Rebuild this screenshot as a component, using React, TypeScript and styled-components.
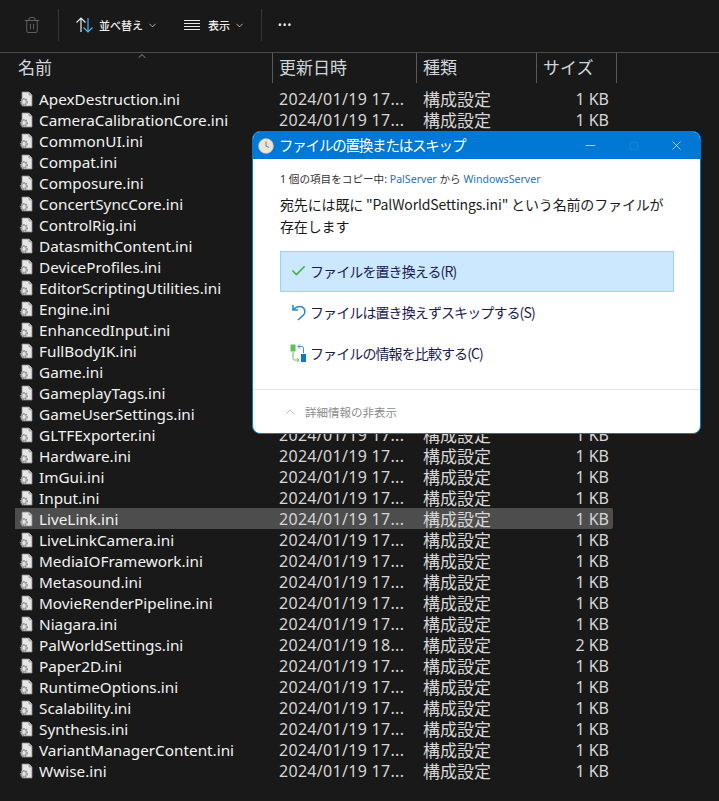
import React from 'react';
import styled, { createGlobalStyle } from 'styled-components';
import { Check, ChevronDown, ChevronUp, Minus, Square, Trash2, X } from 'lucide-react';

const LATIN = `"Noto Sans", "Noto Sans CJK JP", sans-serif`;

const files: { name: string; date?: string; size?: string }[] = [
  { name: 'ApexDestruction.ini' },
  { name: 'CameraCalibrationCore.ini' },
  { name: 'CommonUI.ini' },
  { name: 'Compat.ini' },
  { name: 'Composure.ini' },
  { name: 'ConcertSyncCore.ini' },
  { name: 'ControlRig.ini' },
  { name: 'DatasmithContent.ini' },
  { name: 'DeviceProfiles.ini' },
  { name: 'EditorScriptingUtilities.ini' },
  { name: 'Engine.ini' },
  { name: 'EnhancedInput.ini' },
  { name: 'FullBodyIK.ini' },
  { name: 'Game.ini' },
  { name: 'GameplayTags.ini' },
  { name: 'GameUserSettings.ini' },
  { name: 'GLTFExporter.ini' },
  { name: 'Hardware.ini' },
  { name: 'ImGui.ini' },
  { name: 'Input.ini' },
  { name: 'LiveLink.ini' },
  { name: 'LiveLinkCamera.ini' },
  { name: 'MediaIOFramework.ini' },
  { name: 'Metasound.ini' },
  { name: 'MovieRenderPipeline.ini' },
  { name: 'Niagara.ini' },
  { name: 'PalWorldSettings.ini', date: '2024/01/19 18...', size: '2 KB' },
  { name: 'Paper2D.ini' },
  { name: 'RuntimeOptions.ini' },
  { name: 'Scalability.ini' },
  { name: 'Synthesis.ini' },
  { name: 'VariantManagerContent.ini' },
  { name: 'Wwise.ini' },
];

const FileIcon = () => (
  <svg width="14" height="16" viewBox="0 0 14 16">
    <path d="M3 1h7l3 3v11H3z" fill="#e6e6e6" stroke="#8a8a8a" strokeWidth="0.8" />
    <path d="M10 1v3h3" fill="#bdbdbd" stroke="#8a8a8a" strokeWidth="0.6" />
    <circle cx="4.8" cy="11" r="3" fill="none" stroke="#8c8c8c" strokeWidth="2" strokeDasharray="1.4 0.8" />
    <circle cx="4.8" cy="11" r="2.6" fill="none" stroke="#a8a8a8" strokeWidth="1" />
  </svg>
);

const SortIcon = () => (
  <svg width="20" height="18" viewBox="0 0 20 18" fill="none" strokeWidth="1.2">
    <path d="M6 16V2M1.5 6.5 6 2l4.500 4.500" stroke="#e8e8e8" />
    <path d="M13 2v14M8.500 11.500 13 16l4.500-4.500" stroke="#4fb0f0" />
  </svg>
);

const ViewIcon = () => (
  <svg width="20" height="12" viewBox="0 0 20 12" fill="none" stroke="#e8e8e8" strokeWidth="1">
    <path d="M0 1.500h16M0 4.500h16M0 7.500h16M0 10.500h16" />
  </svg>
);

const ClockIcon = () => (
  <svg width="16" height="16" viewBox="0 0 16 16">
    <circle cx="8" cy="8" r="7.500" fill="#e9e4dc" stroke="#b9b4aa" strokeWidth="0.6" />
    <path d="M8 3.500V8l3 1.500" fill="none" stroke="#8a857c" strokeWidth="1.100" />
  </svg>
);

const SkipIcon = () => (
  <svg width="16" height="18" viewBox="0 0 16 18" fill="none">
    <path d="M2 2v5h5" stroke="#2a86d8" strokeWidth="1.600" />
    <path d="M2.500 6.500C5 3.800 8 3 10.500 3.800 14 5 15 9 12.500 12L7 17" stroke="#2a86d8" strokeWidth="1.600" />
  </svg>
);

const CompareIcon = () => (
  <svg width="17" height="18" viewBox="0 0 17 18" fill="none">
    <rect x="0.500" y="0.500" width="5" height="7" fill="#5cc05c" />
    <rect x="11" y="10" width="5" height="8" fill="#0a78d4" />
    <path d="M3 8v6.500c0 1 .5 1.500 1.500 1.500H9M7 14l2 2-2 2" stroke="#5cc05c" strokeWidth="1" />
    <path d="M13.500 9V4c0-1-.5-1.500-1.500-1.500H8M10 .5l-2 2 2 2" stroke="#3a93d8" strokeWidth="1" />
  </svg>
);

const App: React.FC = () => (
  <Page>
    <GlobalStyle />
    <Toolbar>
      <TrashButton>
        <Trash2 size={18} strokeWidth={1.1} color="#707070" />
      </TrashButton>
      <ToolbarDivider />
      <ToolButton $width={109}>
        <SortIcon />
        <ToolLabel>並べ替え</ToolLabel>
        <ChevronDown size={11} color="#bcbcbc" />
      </ToolButton>
      <ToolButton $width={93}>
        <ViewIcon />
        <ToolLabel>表示</ToolLabel>
        <ChevronDown size={11} color="#bcbcbc" />
      </ToolButton>
      <ToolbarDivider />
      <MoreDots>•••</MoreDots>
    </Toolbar>

    <HeaderRow>
      <HeaderCell>
        名前
        <SortCaret>
          <ChevronUp size={12} strokeWidth={1.500} color="#b5b5b5" />
        </SortCaret>
      </HeaderCell>
      <HeaderCell>更新日時</HeaderCell>
      <HeaderCell>種類</HeaderCell>
      <HeaderCell>サイズ</HeaderCell>
    </HeaderRow>

    <FileList>
      {files.map((f) => (
        <FileRow key={f.name} $selected={f.name === 'LiveLink.ini'}>
          <NameCell>
            <FileIcon />
            <span>{f.name}</span>
          </NameCell>
          <DateCell>{f.date ?? '2024/01/19 17...'}</DateCell>
          <TypeCell>構成設定</TypeCell>
          <SizeCell>{f.size ?? '1 KB'}</SizeCell>
        </FileRow>
      ))}
    </FileList>

    <Dialog>
      <TitleBar>
        <ClockIcon />
        <TitleText>ファイルの置換またはスキップ</TitleText>
        <WindowButtons>
          <Minus size={15} strokeWidth={1} color="#fff" />
          <Square size={10} strokeWidth={1} color="#3d95dc" />
          <X size={15} strokeWidth={1} color="#fff" />
        </WindowButtons>
      </TitleBar>
      <DialogBody>
        <CopyLine>
          1 個の項目をコピー中: <PathLink>PalServer</PathLink> から <PathLink>WindowsServer</PathLink>
        </CopyLine>
        <Message>宛先には既に "PalWorldSettings.ini" という名前のファイルが存在します</Message>
        <OptionList>
          <Option $active>
            <OptionIcon>
              <Check size={18} strokeWidth={2.400} color="#4cb04c" />
            </OptionIcon>
            <span>ファイルを置き換える(R)</span>
          </Option>
          <Option>
            <OptionIcon>
              <SkipIcon />
            </OptionIcon>
            <span>ファイルは置き換えずスキップする(S)</span>
          </Option>
          <Option>
            <OptionIcon>
              <CompareIcon />
            </OptionIcon>
            <span>ファイルの情報を比較する(C)</span>
          </Option>
        </OptionList>
      </DialogBody>
      <DialogFooter>
        <ChevronUp size={16} strokeWidth={1} color="#9a9a9a" />
        <span>詳細情報の非表示</span>
      </DialogFooter>
    </Dialog>
  </Page>
);

export default App;

const GlobalStyle = createGlobalStyle`
  html, body {
    margin: 0;
    padding: 0;
    background: #191919;
  }
`;

const Page = styled.div`
  position: relative;
  width: 719px;
  height: 801px;
  overflow: hidden;
  background: #191919;
  color: #e4e4e4;
  font-family: ${LATIN};
`;

const Toolbar = styled.div`
  height: 53px;
  box-sizing: border-box;
  padding-top: 9px;
  padding-bottom: 11px;
  display: flex;
  align-items: center;
  border-bottom: 1px solid #4b4b4b;
`;

const TrashButton = styled.div`
  width: 58px;
  display: flex;
  justify-content: center;
  padding-left: 6px;
  box-sizing: border-box;
`;

const ToolbarDivider = styled.div`
  width: 1px;
  height: 32px;
  background: #353535;
`;

const ToolButton = styled.div<{ $width: number }>`
  width: ${(p) => p.$width}px;
  padding-left: 16px;
  box-sizing: border-box;
  display: flex;
  align-items: center;
  gap: 4px;
`;

const ToolLabel = styled.span`
  font-size: 11px;
  font-weight: 500;
  color: #ececec;
  font-family: "Noto Sans CJK JP", sans-serif;
`;

const MoreDots = styled.span`
  margin-left: 16px;
  font-size: 10px;
  letter-spacing: 1px;
  color: #f0f0f0;
`;

const columns = '273px 144px 120px 80px';

const HeaderRow = styled.div`
  display: grid;
  grid-template-columns: ${columns};
  height: 30px;
`;

const HeaderCell = styled.div`
  position: relative;
  display: flex;
  align-items: center;
  padding-left: 6px;
  padding-bottom: 4px;
  box-sizing: border-box;
  border-right: 1px solid #5a5a5a;
  font-size: 17px;
  color: #cfd6dc;
  font-family: "Noto Sans CJK JP", sans-serif;

  &:first-child {
    padding-left: 18px;
  }
`;

const SortCaret = styled.span`
  position: absolute;
  left: 136px;
  top: -3px;
  line-height: 0;
`;

const FileList = styled.div`
  margin-top: 5px;
`;

const FileRow = styled.div<{ $selected?: boolean }>`
  display: grid;
  grid-template-columns: ${columns};
  height: 21px;
  align-items: center;
  font-size: 15.300px;
  margin-right: 106px;
  border-radius: 2px;
  background: ${(p) => (p.$selected ? 'linear-gradient(to right, transparent 15px, #4d4d4d 15px)' : 'transparent')};
`;

const NameCell = styled.div`
  display: flex;
  align-items: center;
  gap: 6px;
  padding-left: 19px;
  color: #f2f2f2;
  white-space: nowrap;
`;

const DateCell = styled.div`
  padding-left: 6px;
  font-size: 16px;
  letter-spacing: 0.300px;
  color: #d6d6d6;
  white-space: nowrap;
`;

const TypeCell = styled.div`
  padding-left: 6px;
  font-size: 17px;
  line-height: 19px;
  height: 21px;
  box-sizing: border-box;
  color: #d6d6d6;
  font-family: "Noto Sans CJK JP", sans-serif;
`;

const SizeCell = styled.div`
  text-align: right;
  padding-right: 8px;
  font-size: 16px;
  color: #d6d6d6;
`;

const Dialog = styled.div`
  position: absolute;
  left: 252px;
  top: 131px;
  width: 449px;
  height: 303px;
  box-sizing: border-box;
  border: 1px solid #0078d4;
  border-radius: 8px;
  background: #fff;
  overflow: hidden;
  display: flex;
  flex-direction: column;
`;

const TitleBar = styled.div`
  height: 27px;
  flex: none;
  padding-left: 5px;
  display: flex;
  align-items: center;
  gap: 5px;
  background: #0078d4;
`;

const TitleText = styled.span`
  font-family: "Noto Sans CJK JP", sans-serif;
  font-size: 14.500px;
  letter-spacing: -1.200px;
  padding-bottom: 3px;
  color: #fff;
`;

const WindowButtons = styled.div`
  margin-left: auto;
  width: 117px;
  padding-right: 16px;
  box-sizing: border-box;
  display: flex;
  align-items: center;
  justify-content: space-between;
`;

const DialogBody = styled.div`
  flex: 1;
  padding: 11px 26px 0 27px;
  font-family: "Noto Sans CJK JP", sans-serif;
`;

const CopyLine = styled.div`
  font-size: 10.600px;
  line-height: 18px;
  color: #333;
  font-family: ${LATIN};
`;

const PathLink = styled.span`
  color: #1f6fc4;
`;

const Message = styled.div`
  margin-top: 5px;
  font-size: 14px;
  line-height: 22px;
  letter-spacing: -0.150px;
  color: #1a1a1a;
`;

const OptionList = styled.div`
  margin-top: 14px;
  display: flex;
  flex-direction: column;
`;

const Option = styled.div<{ $active?: boolean }>`
  height: 41px;
  box-sizing: border-box;
  padding-left: 9px;
  padding-bottom: 1px;
  display: flex;
  align-items: center;
  gap: 3px;
  font-size: 14px;
  letter-spacing: -0.900px;
  color: #1b1b50;
  border: 1px solid ${(p) => (p.$active ? '#99d1ff' : 'transparent')};
  background: ${(p) => (p.$active ? '#cce8ff' : 'transparent')};
`;

const OptionIcon = styled.span`
  width: 17px;
  display: flex;
  justify-content: center;
`;

const DialogFooter = styled.div`
  height: 44px;
  flex: none;
  box-sizing: border-box;
  border-top: 1px solid #e4e4e4;
  padding-left: 29px;
  display: flex;
  align-items: center;
  gap: 7px;
  font-family: "Noto Sans CJK JP", sans-serif;
  font-size: 11.500px;
  color: #8c8c8c;
`;
